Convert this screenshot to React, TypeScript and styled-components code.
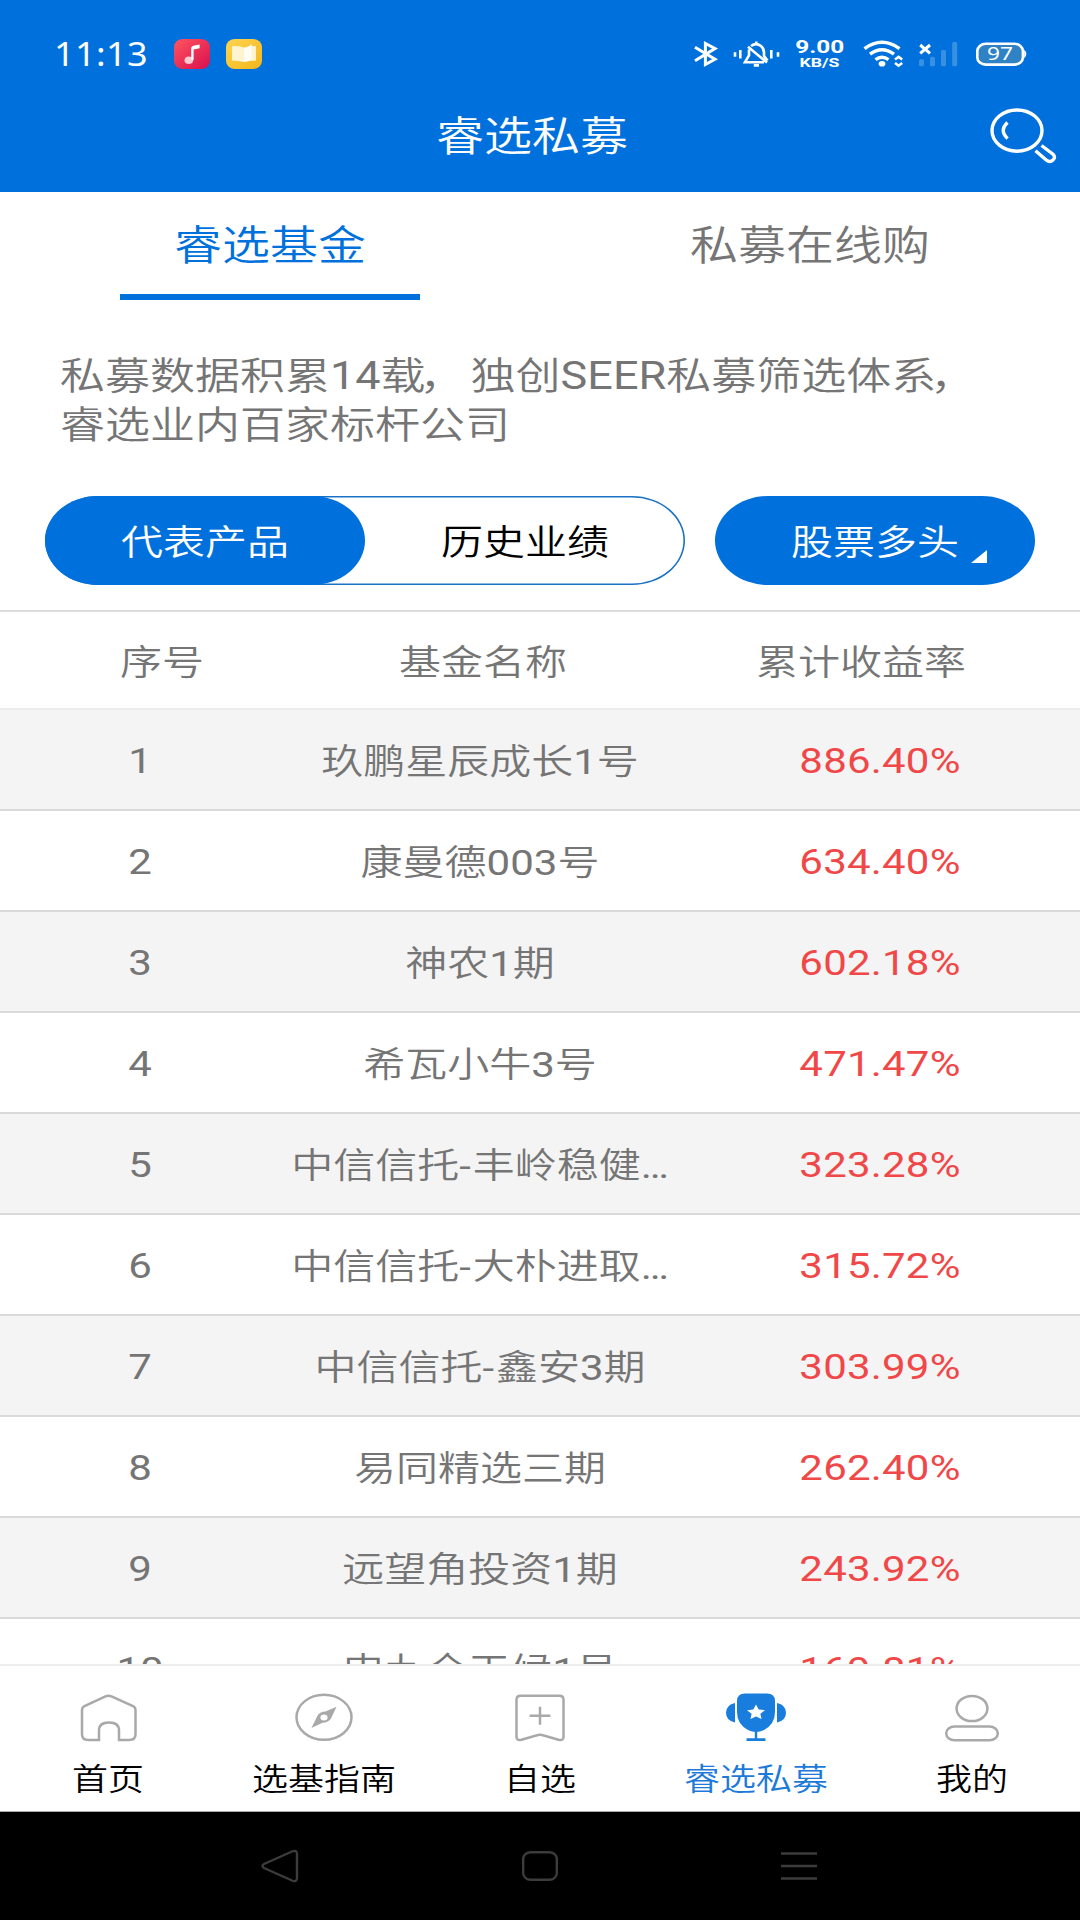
import React from 'react';
import styled, { createGlobalStyle } from 'styled-components';

const BLUE = '#0071dc';
const GREY = '#757575';
const SQUASH = 0.842;

const GlobalStyle = createGlobalStyle`
  *, *::before, *::after { box-sizing: border-box; }
  body {
    margin: 0;
    background: #fff;
    font-family: Roboto, "Noto Sans CJK SC DemiLight", "Noto Sans CJK SC", sans-serif;
    font-weight: 400;
  }
`;

const Screen = styled.div`
  width: 1080px;
  height: 1920px;
  display: flex;
  flex-direction: column;
  overflow: hidden;
  background: #fff;
`;

const Label = styled.span<{ $size?: number; $shift?: number; $track?: number }>`
  display: inline-block;
  white-space: nowrap;
  font-size: ${(p) => p.$size ?? 42}px;
  letter-spacing: ${(p) => p.$track ?? 0}px;
  line-height: 1.2;
  transform: translateY(${(p) => p.$shift ?? 0}px) scaleY(${SQUASH});
`;

const Comma = styled.span`
  display: inline-block;
  transform: translateX(-6px);
`;

const Dash = styled.span`
  letter-spacing: 2px;
`;

const Header = styled.header`
  height: 192px;
  flex: none;
  background: ${BLUE};
  color: #fff;
`;

const StatusBar = styled.div`
  height: 80px;
  padding: 28px 50px 0 54px;
  display: flex;
  justify-content: space-between;
`;

const StatusGroup = styled.div<{ $gap: number }>`
  height: 52px;
  display: flex;
  align-items: center;
  gap: ${(p) => p.$gap}px;
`;

const Clock = styled.span`
  width: 104px;
  font-family: "Noto Sans", sans-serif;
  font-size: 36px;
  letter-spacing: 0.4px;
  line-height: 44px;
  transform: scaleY(0.9);
`;

const StatusIcons = styled.svg`
  display: block;
`;

const TitleBar = styled.div`
  height: 112px;
  padding-right: 22px;
  display: grid;
  grid-template-columns: 76px 1fr 70px;
  align-items: center;
  justify-items: center;
`;

const Tabs = styled.nav`
  flex: none;
  height: 108px;
  display: grid;
  grid-template-columns: 1fr 1fr;
`;

const Tab = styled.div<{ $active?: boolean }>`
  display: flex;
  flex-direction: column;
  align-items: center;
  justify-content: space-between;
  padding-top: 24px;
  color: ${(p) => (p.$active ? BLUE : GREY)};
  &::after {
    content: "";
    width: 300px;
    height: 6px;
    background: ${(p) => (p.$active ? BLUE : 'transparent')};
  }
`;

const Intro = styled.div`
  flex: none;
  height: 196px;
  padding: 51px 60px 0;
  display: flex;
  flex-direction: column;
  align-items: flex-start;
  color: ${GREY};
`;

const IntroLine = styled.div`
  height: 49px;
  display: flex;
  align-items: center;
`;

const Filters = styled.div`
  flex: none;
  height: 114px;
  padding: 0 45px;
  display: flex;
  justify-content: space-between;
  align-items: flex-start;
`;

const Segment = styled.div`
  width: 640px;
  height: 89px;
  display: flex;
  border-radius: 53px / 44.5px;
  box-shadow: inset 0 0 0 1.6px #1a72c4;
`;

const Pill = styled.div<{ $filled?: boolean }>`
  width: 320px;
  height: 89px;
  display: flex;
  align-items: center;
  justify-content: center;
  padding-top: 2px;
  border-radius: 53px / 44.5px;
  background: ${(p) => (p.$filled ? BLUE : 'transparent')};
  color: ${(p) => (p.$filled ? '#fff' : '#000')};
`;

const Corner = styled.svg`
  align-self: flex-end;
  margin: 0 -28px 22px 12px;
`;

const Table = styled.main`
  flex: none;
  height: 1054px;
  overflow: hidden;
  border-top: 2px solid #dcdcdc;
  color: ${GREY};
`;

const HeadRow = styled.div`
  height: 98px;
  border-bottom: 2px solid #ececec;
  display: grid;
  grid-template-columns: 324px 318px 438px;
  align-items: center;
  justify-items: center;
  padding-top: 3px;
`;

const Row = styled.div<{ $shaded: boolean }>`
  height: 101px;
  border-bottom: 2px solid #dadada;
  background: ${(p) => (p.$shaded ? '#f4f4f4' : '#fff')};
  display: grid;
  grid-template-columns: 280px 400px 400px;
  align-items: center;
  justify-items: center;
  padding-top: 3px;
`;

const Rate = styled(Label)`
  color: #f04848;
`;

const BottomNav = styled.nav`
  flex: none;
  height: 148px;
  border-top: 2px solid #eee;
  border-bottom: 1px solid #aaa;
  background: #fff;
  display: grid;
  grid-template-columns: repeat(5, 1fr);
`;

const NavItem = styled.div<{ $active?: boolean }>`
  display: flex;
  flex-direction: column;
  align-items: center;
  padding-top: 24px;
  gap: 14px;
  color: ${(p) => (p.$active ? '#1e7ad8' : '#000')};
`;

const NavIcon = styled.svg`
  width: 64px;
  height: 55px;
  fill: none;
  stroke: #a9a9a9;
  stroke-width: 2.5;
  overflow: visible;
`;

const SystemNav = styled.div`
  flex: 1;
  background: #000;
  display: flex;
  justify-content: center;
  align-items: center;
  gap: 223px;
  padding-right: 3px;
`;

const SystemIcon = styled.svg`
  fill: none;
  stroke: #3c3c3c;
  stroke-width: 2.4;
  overflow: visible;
`;

const funds: [string, string][] = [
  ['玖鹏星辰成长1号', '886.40%'],
  ['康曼德003号', '634.40%'],
  ['神农1期', '602.18%'],
  ['希瓦小牛3号', '471.47%'],
  ['中信信托-丰岭稳健…', '323.28%'],
  ['中信信托-大朴进取…', '315.72%'],
  ['中信信托-鑫安3期', '303.99%'],
  ['易同精选三期', '262.40%'],
  ['远望角投资1期', '243.92%'],
  ['申九全天候1号', '169.81%'],
];

const FundName = ({ name }: { name: string }) => {
  const [head, tail] = name.split('-');
  return (
    <Label $shift={1}>
      {head}
      {tail && <Dash>-</Dash>}
      {tail}
    </Label>
  );
};

const MusicIcon = () => (
  <svg width="36" height="30" viewBox="0 0 36 30">
    <defs>
      <linearGradient id="music" x1="0" y1="0" x2="1" y2="1">
        <stop offset="0" stopColor="#ff5560" />
        <stop offset="1" stopColor="#d80f4e" />
      </linearGradient>
    </defs>
    <rect width="36" height="30" rx="9" ry="8" fill="url(#music)" />
    <ellipse cx="14.8" cy="21.2" rx="4.3" ry="3.8" fill="#ffc9cf" />
    <path d="M17.2 21V9.2Q17.2 7.2 19.2 6.7L25.6 5.6V9.2L19.6 10.4V21Z" fill="#fff" />
  </svg>
);

const BookIcon = () => (
  <svg width="36" height="30" viewBox="0 0 36 30">
    <defs>
      <linearGradient id="book" x1="0" y1="0" x2="1" y2="1">
        <stop offset="0" stopColor="#ffd452" />
        <stop offset="1" stopColor="#f2b619" />
      </linearGradient>
    </defs>
    <rect width="36" height="30" rx="9" ry="8" fill="url(#book)" />
    <path d="M6 7.2Q12 6.6 18 8.4Q24 6.6 30 7.2V21.6Q24 22 18 23Q12 22 6 21.6Z" fill="#fff4d0" />
    <path d="M18 9.4Q23 8.4 25.6 5V19.5Q23 22.4 18 23Z" fill="#fffdf6" />
  </svg>
);

const SystemStatus = () => (
  <StatusIcons width="346" height="52" viewBox="0 0 346 52" fill="none" stroke="#fff" strokeWidth="2.6">
    <path d="M11 19.2L31 31.2L21.4 36.5V15.5L31 20.5L11 32.8" strokeWidth="3" />
    <g>
      <path d="M51 24.3V28.7M56.3 22V30.5M87.3 22V30.5M94 24.3V28.7" />
      <path d="M67 18Q72 14.2 77 18Q80 20.5 80 24.5V28L83.5 32.5M65 21.5V27.5L61 34.2H80M64 18.8L83 34.6" />
      <path d="M72.3 13.5V16M69.8 37.4H75" />
    </g>
    <g stroke="none" fill="#fff" fontFamily="Roboto" fontWeight="700">
      <text x="135.7" y="25.4" textAnchor="middle" fontSize="18.5" textLength="49" lengthAdjust="spacingAndGlyphs">9.00</text>
      <text x="135.5" y="39.4" textAnchor="middle" fontSize="13.4" textLength="40" lengthAdjust="spacingAndGlyphs">KB/S</text>
    </g>
    <g strokeWidth="3.5">
      <path d="M180.5 20.6Q198 8 215.5 20.6M186 26.2Q198 17.4 210 26.2M191.5 31.6Q198 26.8 204.5 31.6" />
      <ellipse cx="198" cy="35.8" rx="3.4" ry="2.8" fill="#fff" stroke="none" />
      <path d="M211 31.6L214.6 28.9L218.2 31.6M211 35L214.6 37.7L218.2 35" strokeWidth="2.5" />
    </g>
    <path d="M236.2 17L246 25.4M246 17L236.2 25.4" strokeWidth="3" />
    <g fill="#fff" fillOpacity="0.22" stroke="none">
      <rect x="235" y="31.3" width="5" height="7" rx="1.5" />
      <rect x="246" y="28.7" width="5" height="9.6" rx="1.5" />
      <rect x="257" y="22" width="5" height="16.3" rx="1.5" />
      <rect x="268.2" y="14" width="5" height="24.3" rx="1.5" />
    </g>
    <rect x="293.3" y="15.8" width="45.6" height="20.8" rx="8.5" ry="7.2" fill="#2f82c4" />
    <path d="M340.2 21.5Q344.5 26 340.2 30.5Z" fill="#fff" stroke="none" />
    <text x="316" y="32.3" textAnchor="middle" fontFamily="Noto Sans" fontSize="17.5" textLength="26" lengthAdjust="spacingAndGlyphs" fill="#fff" stroke="none">97</text>
  </StatusIcons>
);

const SearchIcon = () => (
  <svg width="70" height="60" viewBox="0 0 70 60" fill="none" stroke="#fff" strokeWidth="3.4">
    <ellipse cx="29" cy="24.6" rx="25" ry="20.6" />
    <path d="M19.5 16.4Q11 24 19.5 32.6" />
    <path d="M47.5 44.8L58.5 54.2Q62 56.8 65 54Q68 51.2 65 48.2L53.5 39.5" />
  </svg>
);

const HomeIcon = () => (
  <NavIcon viewBox="0 0 64 55">
    <path d="M23 50H12.5Q6 50 6 44.5V20Q6 17.5 8.5 16L29.5 6.4Q32.5 5 35.5 6.4L57 16Q59.5 17.5 59.5 20V44.5Q59.5 50 53 50H43V40.5Q43 32.5 33 32.5Q23 32.5 23 40.5Z" />
    <path d="M24.4 50H41.6" stroke="#fff" strokeWidth="0" />
  </NavIcon>
);

const CompassIcon = () => (
  <NavIcon viewBox="0 0 64 55">
    <ellipse cx="32" cy="27.3" rx="27.5" ry="22.5" />
    <path fillRule="evenodd" fill="#a9a9a9" stroke="none" d="M44.5 16.8L39 28.5Q36.5 32.5 30.5 32.8L19.5 38L25.3 26Q27.5 21.5 33.5 21.5ZM32 24.4A3.6 3 0 1 0 32 30.4A3.6 3 0 1 0 32 24.4Z" />
  </NavIcon>
);

const BookmarkIcon = () => (
  <NavIcon viewBox="0 0 64 55">
    <path d="M12.5 5.8H51.5Q55.5 5.8 55.5 9.8V47Q55.5 51 50.5 49.7L34 45Q32 44.5 30 45L13.5 49.7Q8.5 51 8.5 47V9.8Q8.5 5.8 12.5 5.8Z" />
    <path d="M21.6 25.7H42.4M32 16.8V34.8" />
  </NavIcon>
);

const TrophyIcon = () => (
  <NavIcon viewBox="0 0 64 55">
    <g fill="#187ddd" stroke="none">
      <path d="M21 3.5H43Q51 3.5 51 11V22Q51 34 40 40Q32 44 24 40Q13 34 13 22V11Q13 3.5 21 3.5Z" />
      <path d="M11 13V32.5Q2 30.5 2 22.7Q2 15 11 13ZM53 13V32.5Q62 30.5 62 22.7Q62 15 53 13Z" />
      <path d="M30.8 40H33.2V48.3H41.5V51H22.5V48.3H30.8Z" />
      <path fill="#fff" d="M32 14.5L34.7 19.4L41 20.2L36.4 23.8L37.5 29L32 26.5L26.5 29L27.6 23.8L23 20.2L29.3 19.4Z" />
    </g>
  </NavIcon>
);

const ProfileIcon = () => (
  <NavIcon viewBox="0 0 64 55">
    <ellipse cx="32" cy="18.5" rx="15.4" ry="12.6" />
    <rect x="6.2" y="36.6" width="51.6" height="13.6" rx="8.3" ry="6.8" />
  </NavIcon>
);

const navItems = [
  { label: '首页', icon: <HomeIcon /> },
  { label: '选基指南', icon: <CompassIcon /> },
  { label: '自选', icon: <BookmarkIcon /> },
  { label: '睿选私募', icon: <TrophyIcon />, active: true },
  { label: '我的', icon: <ProfileIcon /> },
];

export default function App() {
  return (
    <Screen>
      <GlobalStyle />
      <Header>
        <StatusBar>
          <StatusGroup $gap={16}>
            <Clock>11:13</Clock>
            <MusicIcon />
            <BookIcon />
          </StatusGroup>
          <SystemStatus />
        </StatusBar>
        <TitleBar>
          <span />
          <Label $size={48} $shift={2}>睿选私募</Label>
          <SearchIcon />
        </TitleBar>
      </Header>
      <Tabs>
        <Tab $active>
          <Label $size={48} $shift={2}>睿选基金</Label>
        </Tab>
        <Tab>
          <Label $size={48} $shift={2}>私募在线购</Label>
        </Tab>
      </Tabs>
      <Intro>
        <IntroLine>
          <Label $size={45}>
            私募数据积累14载<Comma>，</Comma>独创SEER私募筛选体系<Comma>，</Comma>
          </Label>
        </IntroLine>
        <IntroLine>
          <Label $size={45}>睿选业内百家标杆公司</Label>
        </IntroLine>
      </Intro>
      <Filters>
        <Segment>
          <Pill $filled>
            <Label $shift={2}>代表产品</Label>
          </Pill>
          <Pill>
            <Label $shift={2}>历史业绩</Label>
          </Pill>
        </Segment>
        <Pill $filled>
          <Label $shift={2}>股票多头</Label>
          <Corner width="16" height="13" viewBox="0 0 16 13">
            <path d="M16 0V13H0Z" fill="#fff" />
          </Corner>
        </Pill>
      </Filters>
      <Table>
        <HeadRow>
          <Label $shift={2}>序号</Label>
          <Label $shift={2}>基金名称</Label>
          <Label $shift={2}>累计收益率</Label>
        </HeadRow>
        {funds.map(([name, rate], i) => (
          <Row key={name} $shaded={i % 2 === 0}>
            <Label>{i + 1}</Label>
            <FundName name={name} />
            <Rate $track={0.2}>{rate}</Rate>
          </Row>
        ))}
      </Table>
      <BottomNav>
        {navItems.map((item) => (
          <NavItem key={item.label} $active={item.active}>
            {item.icon}
            <Label $size={36}>{item.label}</Label>
          </NavItem>
        ))}
      </BottomNav>
      <SystemNav>
        <SystemIcon width="38" height="34" viewBox="0 0 38 34">
          <path d="M3 15L31 2.5Q36 0.5 36 5V29Q36 33.5 31 31.5L3 19Q0 17 3 15Z" />
        </SystemIcon>
        <SystemIcon width="36" height="30" viewBox="0 0 36 30">
          <rect x="1.2" y="1.2" width="33.6" height="27.6" rx="7.5" ry="6.5" />
        </SystemIcon>
        <SystemIcon width="36" height="28" viewBox="0 0 36 28">
          <path d="M0 1.5H36M0 14H36M0 26.5H36" />
        </SystemIcon>
      </SystemNav>
    </Screen>
  );
}
